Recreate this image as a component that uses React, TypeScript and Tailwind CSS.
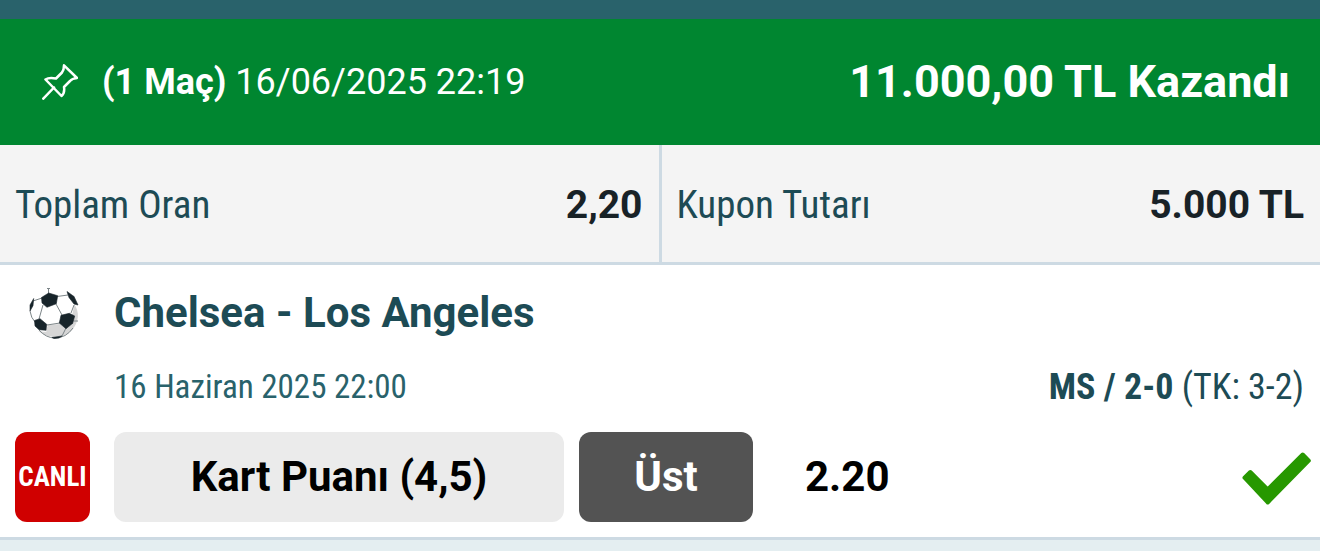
const coupon = {
  matchCount: '(1 Maç)',
  placedAt: '16/06/2025 22:19',
  result: '11.000,00 TL Kazandı',
};

const totals = [
  { label: 'Toplam Oran', value: '2,20' },
  { label: 'Kupon Tutarı', value: '5.000 TL' },
];

function PinIcon() {
  return (
    <svg viewBox="0 0 36 36" className="h-9 w-9 shrink-0" fill="none" stroke="currentColor" strokeWidth="2.500" strokeLinecap="round" strokeLinejoin="round" aria-hidden="true">
      <path d="M22 1.300 L35 14 Q30 14.500 28 17 L22 23 Q23 29 19.500 32 L3.500 15.500 Q7 13 14 14.500 L20 8.500 Q22 6 22 1.300 Z" />
      <path d="M12 23.500 L1.300 34.700" />
    </svg>
  );
}

function BallIcon() {
  return (
    <svg viewBox="0 0 52 52" className="h-[52px] w-[52px] shrink-0" aria-hidden="true">
      <path d="M46 17 C52 25 51 35 44 43 C35 52 20 52 10 44 C20 46 30 45 38 40 C43 35 45 27 46 17 Z" fill="#d6d6d6" />
      <path d="M18 43 L20 38 L32 37 L38 41 L34 48 L26 50 L19 47 Z" fill="#d6d6d6" />
      <g fill="none" stroke="#7c8588" strokeWidth="1">
        <path d="M19 1.500 H22 M20.500 1.500 V7" />
        <path d="M29 9.500 L40 8 M14 11 L5 14 M15 18 L11 32 M28 17 L34 28 M46 18 L43 26 M19 38 L32 36 M46 34 L50 34 M38 41 L34 49 M2 24 Q3 31 7 35" />
        <path d="M11 43 Q18 51 27 51 Q38 51 45 41" />
      </g>
      <g fill="#17242a" stroke="#17242a" strokeWidth="0.600" strokeLinejoin="round">
        <path d="M20.700 6 L29.700 8.700 L28.300 16.700 L19 20.300 L14 16 L13.500 10.500 Z" />
        <path d="M6.500 33.500 L12 31.700 L18.700 37.300 L18 43.300 L11 42.700 L7 39 Z" />
        <path d="M33 28.300 L41.300 26.300 L46.700 29 L44.700 36.300 L38 41.700 L31.300 36 Z" />
        <path d="M39 4.500 L46 9.500 L50 18 L46 17 L41 10.500 Z" />
        <path d="M5.700 11.500 L5 18.700 L2 24 L2 18 Z" />
        <path d="M24 50.500 L34 49 L31 51 L26 51.500 Z" />
      </g>
    </svg>
  );
}

function CheckIcon() {
  return (
    <svg viewBox="0 0 70 56" className="h-14 w-[70px] shrink-0" role="img" aria-label="Kazandı">
      <path d="M8.300 23 L25.700 40.500 L60.700 5.500 L66.800 11.700 L25.700 53.500 L2.500 28.700 Z" fill="#279800" stroke="#279800" strokeWidth="4" strokeLinejoin="round" />
    </svg>
  );
}

export default function App() {
  return (
    <main className="w-full overflow-hidden bg-white font-['Roboto',sans-serif] text-[#1d4b55]">
      <div className="h-[19px] bg-[#29626b]" />

      <header className="flex h-[126px] items-center justify-between bg-[#008630] pr-[30px] pl-[42px] text-white">
        <div className="flex items-center gap-6">
          <PinIcon />
          <p className="text-[36px] leading-[48px]">
            <strong className="font-bold">{coupon.matchCount}</strong> {coupon.placedAt}
          </p>
        </div>
        <h1 className="text-[45px] leading-[48px] font-bold">{coupon.result}</h1>
      </header>

      <dl className="flex divide-x-3 divide-[#cddae3] border-b-3 border-[#cddae3] bg-[#f4f4f4]">
        {totals.map((item) => (
          <div key={item.label} className="flex h-[117px] flex-1 items-center justify-between pt-0.5 pr-4 pl-[15px]">
            <dt className="font-['Roboto_Condensed','Roboto',sans-serif] text-[39px] leading-[48px]">{item.label}</dt>
            <dd className="text-[39px] leading-[48px] font-bold text-[#182227]">{item.value}</dd>
          </div>
        ))}
      </dl>

      <section className="border-b-3 border-[#cddae3] pt-[22px] pr-4 pb-[15px] pl-[15px]">
        <div className="flex items-center gap-[34px] pl-[13px]">
          <BallIcon />
          <h2 className="text-[42px] leading-[48px] font-bold">Chelsea - Los Angeles</h2>
        </div>
        <div className="mt-6 flex items-center justify-between pl-[99px] font-['Roboto_Condensed','Roboto',sans-serif] leading-[48px]">
          <time dateTime="2025-06-16T22:00" className="text-[33px] text-[#29626b]">16 Haziran 2025 22:00</time>
          <p className="text-[36px]">
            <strong className="font-bold">MS / 2-0</strong> (TK: 3-2)
          </p>
        </div>
        <div className="mt-[21px] flex h-[90px] items-stretch text-[42px] leading-[48px] font-bold text-black">
          <span className="flex w-[75px] shrink-0 items-center justify-center rounded-xl bg-[#d00000] font-['Roboto_Condensed','Roboto',sans-serif] text-[27px] text-white">CANLI</span>
          <button type="button" className="ml-6 w-[450px] rounded-xl bg-[#ebebeb]">Kart Puanı (4,5)</button>
          <button type="button" className="ml-[15px] w-[174px] rounded-xl bg-[#535353] text-white">Üst</button>
          <span className="ml-[52px] self-center">2.20</span>
          <span className="-mr-2 ml-auto self-center">
            <CheckIcon />
          </span>
        </div>
      </section>

      <div className="h-[11px] bg-[#e4eef1]" />
    </main>
  );
}
